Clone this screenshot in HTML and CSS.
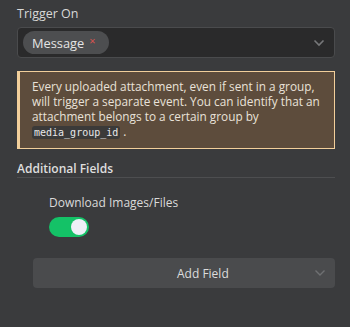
FILE: index.html
```html
<!DOCTYPE html>
<html>
<head>
<meta charset="utf-8">
<link rel="stylesheet" href="styles.css">
</head>
<body>
<div class="panel">
  <div class="label">Trigger On</div>
  <div class="select">
    <div class="chip"><span class="chip-text">Message</span><span class="chip-x">×</span></div>
    <svg class="chev" width="12" height="8" viewBox="0 0 12 8"><path d="M1.5 1.5 L6 6 L10.5 1.5" fill="none" stroke="#77787a" stroke-width="1.6"/></svg>
  </div>
  <div class="notice">Every uploaded attachment, even if sent in a group, will trigger a separate event. You can identify that an attachment belongs to a certain group by <code class="code">media_group_id</code> .</div>
  <div class="section">Additional Fields</div>
  <div class="field">
    <div class="field-label">Download Images/Files</div>
    <div class="toggle"><div class="knob"></div></div>
  </div>
  <div class="add">
    <span class="add-text">Add Field</span>
    <svg class="chev" width="12" height="8" viewBox="0 0 12 8"><path d="M1.5 1.5 L6 6 L10.5 1.5" fill="none" stroke="#6f7072" stroke-width="1.4"/></svg>
  </div>
</div>
</body>
</html>
```

FILE: styles.css
```css
html, body {
  margin: 0;
  padding: 0;
  background: #3a3b3d;
}
body {
  width: 350px;
  height: 327px;
  overflow: hidden;
  font-family: "Open Sans", "Liberation Sans", sans-serif;
  color: #dcdcdc;
}
.panel {
  padding: 5px 15px 0 17px;
  display: flex;
  flex-direction: column;
}
.label {
  font-size: 12.5px;
  line-height: 18px;
  color: #d8d8d8;
  margin-bottom: 4px;
}
.select {
  height: 29px;
  background: #2a2a2b;
  border: 1px solid #4a4b4d;
  border-radius: 4px;
  display: flex;
  align-items: center;
  padding: 0 9px 0 5px;
  justify-content: space-between;
}
.chip {
  height: 23px;
  background: #4d4e50;
  border-radius: 12px;
  display: flex;
  align-items: center;
  padding: 0 14px 0 9px;
}
.chip-text {
  font-size: 12.8px;
  color: #e4e4e4;
}
.chip-x {
  color: #d9534f;
  font-size: 11px;
  margin-left: 5px;
  line-height: 1;
  position: relative;
  top: -2px;
}
.notice {
  margin-top: 13px;
  background: #5d4c3c;
  border: 1px solid #f2cf9b;
  border-left-width: 3px;
  padding: 7px 6px 8px 12px;
  font-size: 11.8px;
  line-height: 15px;
  color: #e9e2d9;
}
.code {
  font-family: "DejaVu Sans Mono", "Liberation Mono", monospace;
  font-size: 10px;
  background: #3b3a39;
  color: #e8e8e8;
  padding: 1px 2px;
  border-radius: 3px;
}
.section {
  margin-top: 12px;
  font-size: 12px;
  font-weight: 600;
  color: #dedede;
  line-height: 16px;
  padding-bottom: 0;
  border-bottom: 1px solid #4d4e50;
}
.field {
  padding-left: 32px;
  margin-top: 16px;
}
.field-label {
  font-size: 12px;
  line-height: 18px;
  color: #dadada;
}
.toggle {
  margin-top: 5px;
  width: 40px;
  height: 20px;
  border-radius: 10px;
  background: #14c267;
  display: flex;
  align-items: center;
  justify-content: flex-end;
  padding: 0 2px;
  box-sizing: border-box;
}
.knob {
  width: 16px;
  height: 16px;
  border-radius: 50%;
  background: #eef0f8;
}
.add {
  margin: 21px 0 0 16px;
  height: 30px;
  background: #4a4b4d;
  border-radius: 4px;
  display: flex;
  align-items: center;
  justify-content: space-between;
  padding: 0 9px 0 144px;
}
.add-text {
  font-size: 12px;
  color: #dcdcdc;
}
```
